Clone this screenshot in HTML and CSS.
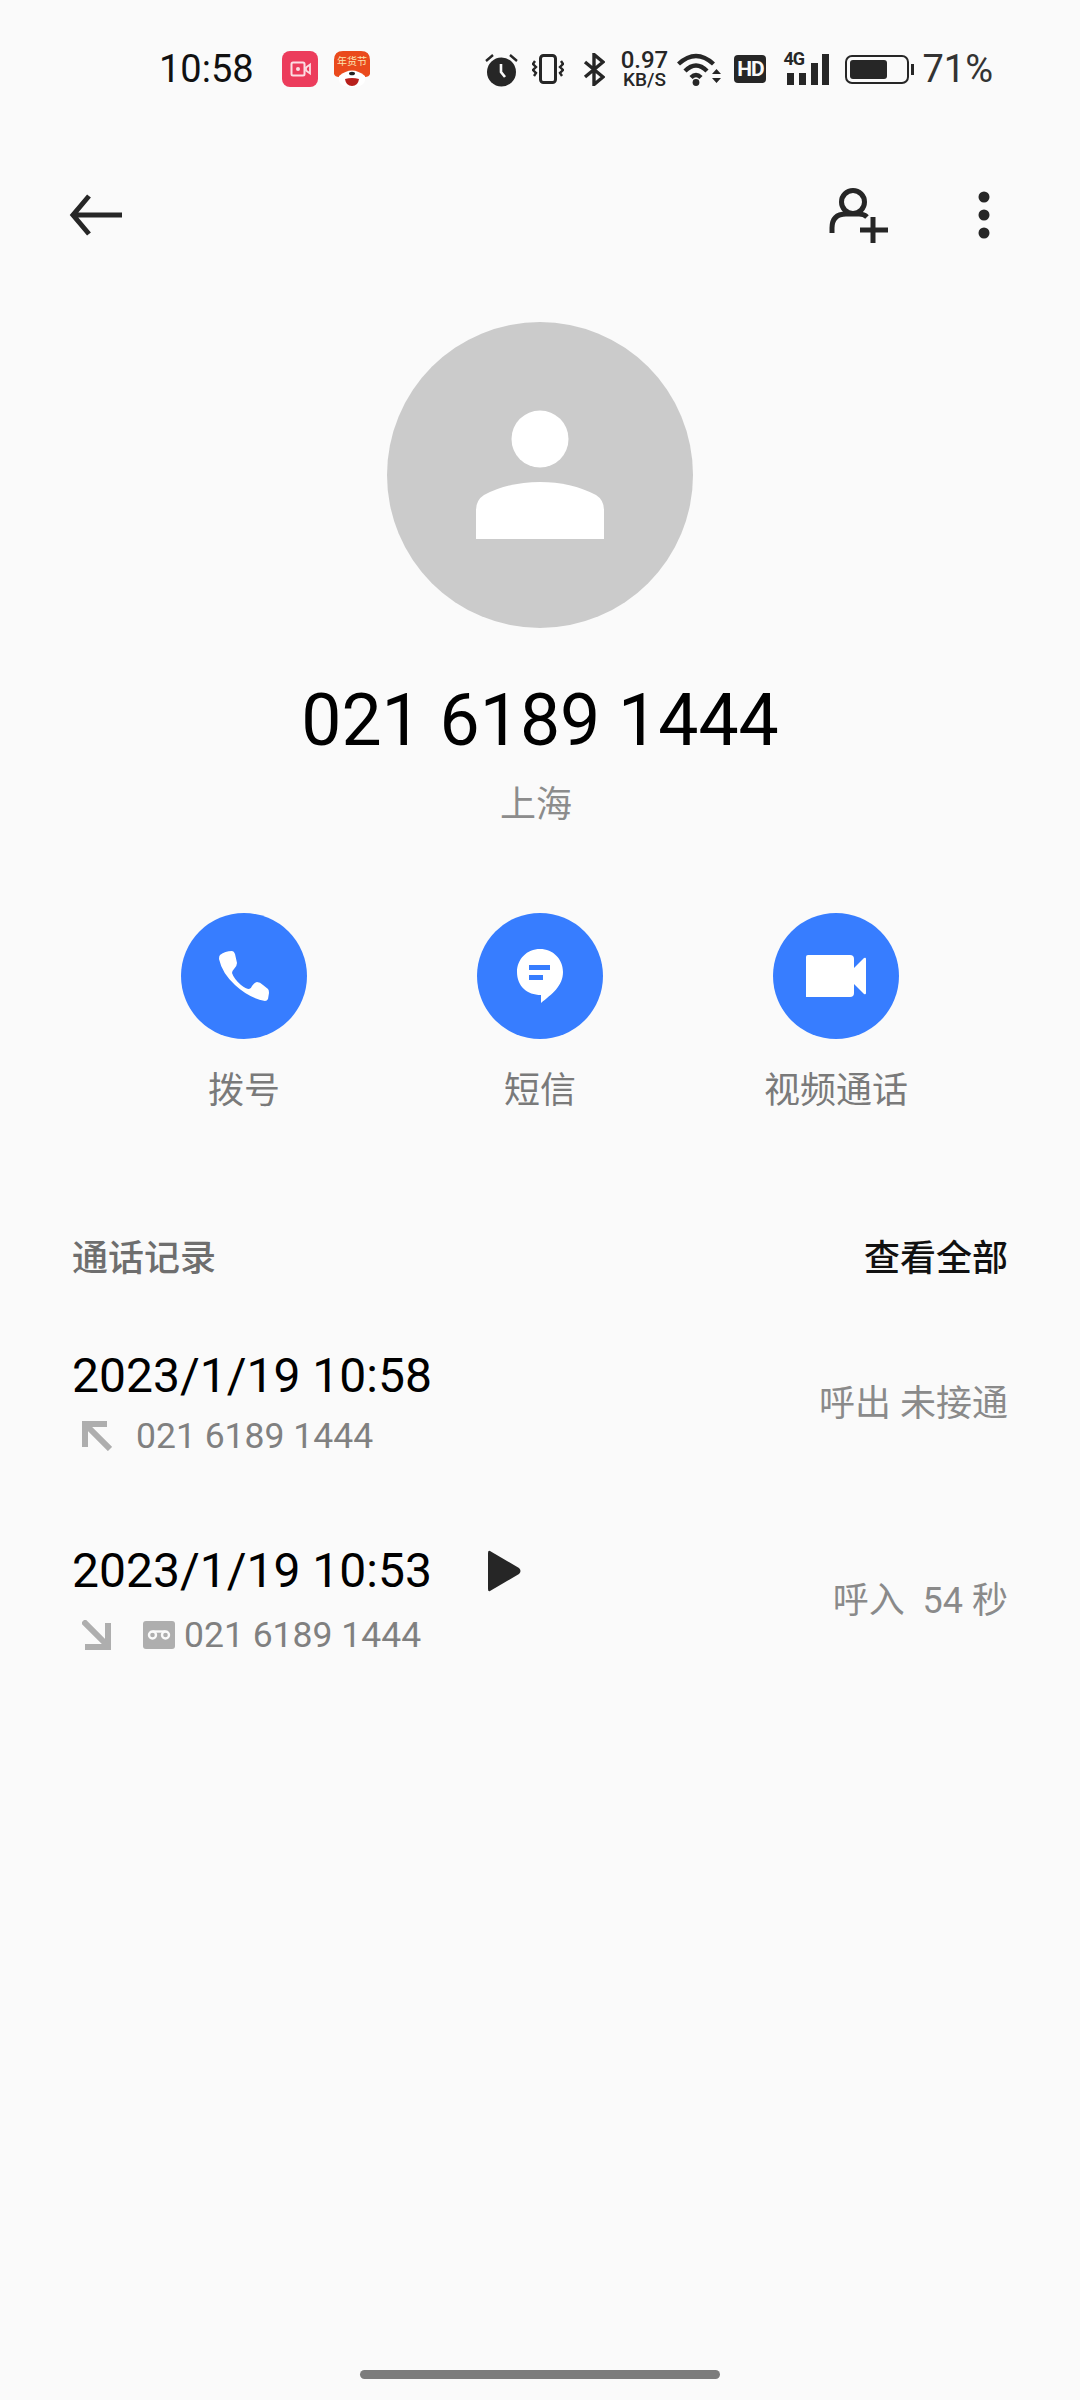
FILE: index.html
```html
<!DOCTYPE html>
<html lang="zh-CN">

<head>
    <meta charset="UTF-8">
    <meta name="viewport" content="width=device-width, initial-scale=1.0">
    <title>通话详情</title>
    <link rel="stylesheet" href="styles.css">
</head>

<body>

    <div class="status-bar">
        <span class="clock">10:58</span>
        <svg class="app-icon record-app" width="36" height="36" viewBox="0 0 36 36">
            <rect width="36" height="36" rx="8" fill="#ec3c5c"/>
            <rect x="9.500" y="11.500" width="13" height="13" rx="1.500" fill="none" stroke="#fbdde3" stroke-width="2"/>
            <circle cx="16" cy="18" r="2" fill="#fbdde3"/>
            <path d="M24 16.500l4-3v9l-4-3z" fill="none" stroke="#fbdde3" stroke-width="1.800"/>
        </svg>
        <svg class="app-icon" width="38" height="38" viewBox="0 0 38 38">
            <path d="M1 24V10Q1 1 10 1H28Q37 1 37 10V24Q36 27 32 27Q19 17 6 27Q2 27 1 24z" fill="#ea4a1c"/>
            <path d="M6 26Q19 15 32 26Q34 37 19 37Q4 37 6 26z" fill="#fff"/>
            <path d="M12 29Q19 27 26 29Q25 36 19 36Q13 36 12 29z" fill="#b8201c"/>
            <ellipse cx="19" cy="23.500" rx="3" ry="1.800" fill="#222"/>
            <text class="jd-text" x="19" y="15" text-anchor="middle">年货节</text>
        </svg>

        <div class="status-right">
            <svg class="alarm" width="33" height="35" viewBox="0 0 33 35">
                <circle cx="16.500" cy="20" r="14.500" fill="#262626"/>
                <path d="M16 12v8l4 5" fill="none" stroke="#fafafa" stroke-width="2.600"/>
                <path d="M1 9l7-6M32 9l-7-6" stroke="#262626" stroke-width="2.400"/>
            </svg>
            <svg class="vibrate" width="32" height="30" viewBox="0 0 32 30">
                <rect x="8.500" y="1.500" width="15" height="27" rx="3" fill="none" stroke="#262626" stroke-width="3"/>
                <path d="M3 7l-2 3 3 3-3 3 3 3-2 3M29 7l2 3-3 3 3 3-3 3 2 3" fill="none" stroke="#262626" stroke-width="2.400"/>
            </svg>
            <svg class="bluetooth" width="22" height="33" viewBox="0 0 22 33">
                <path d="M2 9l18 15-9 7.500V1.500l9 7.500L2 24" fill="none" stroke="#262626" stroke-width="3.400"/>
            </svg>
            <div class="speed">
                <span class="speed-num">0.97</span>
                <span class="speed-unit">KB/S</span>
            </div>
            <svg class="wifi" width="45" height="33" viewBox="0 0 45 33">
                <path d="M1.500 11Q19-5 36.500 11M8 18Q19 7 30 18M14 24.500Q19 19.500 24 24.500" fill="none" stroke="#262626" stroke-width="4.400"/>
                <circle cx="19" cy="29.500" r="3.400" fill="#262626"/>
                <path d="M35 21l4.500-5 4.500 5zM35 25l4.500 5 4.500-5z" fill="#262626"/>
            </svg>
            <div class="hd-badge">HD</div>
            <div class="signal">
                <span class="signal-type">4G</span>
                <span class="bar bar-1"></span>
                <span class="bar bar-2"></span>
                <span class="bar bar-3"></span>
                <span class="bar bar-4"></span>
            </div>
            <div class="battery">
                <div class="battery-body"><div class="battery-level"></div></div>
                <div class="battery-tip"></div>
            </div>
            <span class="battery-text">71%</span>
        </div>
    </div>

    <div class="toolbar">
        <svg width="54" height="42" viewBox="0 0 54 42">
            <path d="M53 21H4M20 2L4 21l16 19" fill="none" stroke="#262626" stroke-width="5"/>
        </svg>
        <div class="toolbar-right">
            <svg width="60" height="56" viewBox="0 0 60 56">
                <circle cx="24" cy="15" r="11.500" fill="none" stroke="#262626" stroke-width="5"/>
                <path d="M3 46V41Q3 27 17 27H30Q35 27 38 30" fill="none" stroke="#262626" stroke-width="5"/>
                <path d="M44 30V56M31 43H59" fill="none" stroke="#262626" stroke-width="5"/>
            </svg>
            <svg class="more" width="12" height="48" viewBox="0 0 12 48">
                <circle cx="6" cy="6" r="5.500" fill="#262626"/>
                <circle cx="6" cy="24" r="5.500" fill="#262626"/>
                <circle cx="6" cy="42" r="5.500" fill="#262626"/>
            </svg>
        </div>
    </div>

    <div class="contact">
        <svg class="avatar" width="306" height="306" viewBox="0 0 306 306">
            <circle cx="153" cy="153" r="153" fill="#cbcbcb"/>
            <circle cx="153" cy="117" r="28.500" fill="#fff"/>
            <path d="M89 217V188Q89 178 97 173Q122 160 153 160Q184 160 209 173Q217 178 217 188V217z" fill="#fff"/>
        </svg>
        <div class="number">021 6189 1444</div>
        <div class="place">上海</div>
    </div>

    <div class="actions">
        <div class="action">
            <div class="action-circle">
                <svg width="50" height="50" viewBox="0 0 50 50">
                    <path d="M1 4Q6 0 13 0Q15 0 16 3L18 12Q18 15 15 18Q13 20 13 22Q15 28 22 34Q27 38 30 38Q32 38 33 35Q36 31 38 31Q41 31 44 34L49 38Q50 39 50 42L49 48Q48 50 46 50Q30 47 16 34Q3 22 0 8Q0 5 1 4z" fill="#fff"/>
                </svg>
            </div>
            <div class="action-label">拨号</div>
        </div>
        <div class="action">
            <div class="action-circle">
                <svg width="48" height="56" viewBox="0 0 48 56">
                    <path d="M24 1C37 1 47 11 47 24C47 38 36 46 25 55V47C11 47 1 38 1 24C1 11 11 1 24 1z" fill="#fff"/>
                    <rect x="13" y="17" width="21" height="5" fill="#377dff"/>
                    <rect x="13" y="27" width="14" height="5" fill="#377dff"/>
                </svg>
            </div>
            <div class="action-label">短信</div>
        </div>
        <div class="action">
            <div class="action-circle">
                <svg width="60" height="42" viewBox="0 0 60 42">
                    <path d="M2 0H44Q48 0 48 4V38Q48 42 44 42H0V2Q0 0 2 0z" fill="#fff"/>
                    <path d="M47 14L58 3Q60 2 60 4V38Q60 40 58 39L47 28z" fill="#fff"/>
                </svg>
            </div>
            <div class="action-label">视频通话</div>
        </div>
    </div>

    <div class="log-head">
        <span class="log-title">通话记录</span>
        <span class="log-all">查看全部</span>
    </div>

    <div class="log-row">
        <div class="log-main">
            <div class="log-date">2023/1/19 10:58</div>
            <div class="log-sub">
                <svg class="direction" width="30" height="30" viewBox="0 0 30 30">
                    <path d="M28 28L5 5M0 3H25M3 0V26" fill="none" stroke="#aeaeae" stroke-width="6"/>
                </svg>
                <span class="log-number">021 6189 1444</span>
            </div>
        </div>
        <div class="log-status">呼出 未接通</div>
    </div>

    <div class="log-row second">
        <div class="log-main">
            <div class="log-date">2023/1/19 10:53
                <svg class="play" width="34" height="42" viewBox="0 0 34 42">
                    <path d="M3 1L32 18Q35 21 32 24L3 41Q1 42 1 39V3Q1 0 3 1z" fill="#262626"/>
                </svg>
            </div>
            <div class="log-sub">
                <svg class="direction" width="30" height="30" viewBox="0 0 30 30">
                    <path d="M1 1L24 24M3 27H28M26 3V30" fill="none" stroke="#aeaeae" stroke-width="6"/>
                </svg>
                <svg class="voicemail" width="32" height="28" viewBox="0 0 32 28">
                    <rect width="32" height="28" rx="3" fill="#aeaeae"/>
                    <circle cx="9.500" cy="14" r="3.500" fill="none" stroke="#fafafa" stroke-width="2.400"/>
                    <circle cx="22.500" cy="14" r="3.500" fill="none" stroke="#fafafa" stroke-width="2.400"/>
                    <path d="M9.500 10.500H22.500" stroke="#fafafa" stroke-width="2.400"/>
                </svg>
                <span class="log-number">021 6189 1444</span>
            </div>
        </div>
        <div class="log-status">呼入&nbsp; 54 秒</div>
    </div>

    <div class="home-bar"></div>

</body>

</html>
```

FILE: styles.css
```css
body {
    margin: 0;
    width: 1080px;
    height: 2400px;
    position: relative;
    overflow: hidden;
    background-color: #fafafa;
    font-family: Roboto, 'Noto Sans CJK SC', sans-serif;
    color: #000;
}

.status-bar {
    height: 138px;
    display: flex;
    align-items: center;
    padding-left: 159px;
    padding-right: 87px;
    box-sizing: border-box;
}

.clock {
    font-size: 38px;
    color: #111;
    width: 123px;
}

.app-icon {
    margin-right: 15px;
}

.jd-text {
    font-size: 10px;
    fill: #fbe3b0;
}

.status-right {
    margin-left: auto;
    display: flex;
    align-items: center;
    color: #262626;
}

.alarm {
    margin-right: 14px;
}

.vibrate {
    margin-right: 19px;
}

.bluetooth {
    margin-right: 14px;
}

.speed {
    width: 50px;
    margin-right: 8px;
    display: flex;
    flex-direction: column;
    align-items: center;
    font-weight: 500;
}

.speed-num {
    font-size: 24px;
    line-height: 21px;
}

.speed-unit {
    font-size: 19px;
    line-height: 18px;
}

.wifi {
    margin-right: 12px;
}

.hd-badge {
    width: 32px;
    height: 28px;
    margin-right: 17px;
    background-color: #262626;
    border-radius: 4px;
    color: #fafafa;
    font-size: 21px;
    font-weight: 700;
    line-height: 28px;
    text-align: center;
    letter-spacing: -1px;
}

.signal {
    width: 46px;
    height: 31px;
    margin-right: 16px;
    position: relative;
    display: flex;
    align-items: flex-end;
    justify-content: space-between;
    padding-left: 4px;
    box-sizing: border-box;
}

.signal-type {
    position: absolute;
    left: 0;
    top: -3px;
    font-size: 18px;
    line-height: 16px;
    font-weight: 700;
    letter-spacing: -1px;
}

.bar {
    width: 7px;
    background-color: #262626;
}

.bar-1 {
    height: 12px;
}

.bar-2 {
    height: 12px;
}

.bar-3 {
    height: 22px;
}

.bar-4 {
    height: 31px;
}

.battery {
    display: flex;
    align-items: center;
    margin-right: 8px;
}

.battery-body {
    width: 64px;
    height: 29px;
    box-sizing: border-box;
    border: 2px solid #262626;
    border-radius: 7px;
    padding: 3px;
}

.battery-level {
    width: 37px;
    height: 100%;
    background-color: #262626;
    border-radius: 3px;
}

.battery-tip {
    width: 3px;
    height: 11px;
    margin-left: 2px;
    background-color: #262626;
}

.battery-text {
    font-size: 38px;
    color: #333;
}

.toolbar {
    height: 154px;
    display: flex;
    align-items: center;
    justify-content: space-between;
    padding: 0 90px 0 69px;
}

.toolbar-right {
    display: flex;
    align-items: center;
    gap: 89px;
}

.contact {
    display: flex;
    flex-direction: column;
    align-items: center;
    margin-top: 30px;
}

.avatar {
    display: block;
}

.number {
    margin-top: 51px;
    font-size: 71.500px;
    line-height: 84px;
}

.place {
    margin-top: 18px;
    margin-right: 8px;
    font-size: 36px;
    line-height: 48px;
    color: #8c8c8c;
}

.actions {
    display: flex;
    justify-content: center;
    gap: 130px;
    margin-top: 84px;
}

.action {
    width: 166px;
    display: flex;
    flex-direction: column;
    align-items: center;
}

.action-circle {
    width: 126px;
    height: 126px;
    border-radius: 50%;
    background-color: #377dff;
    display: flex;
    align-items: center;
    justify-content: center;
}

.action-label {
    margin-top: 28px;
    font-size: 36px;
    line-height: 48px;
    color: #7a7a7a;
    white-space: nowrap;
}

.log-head {
    display: flex;
    justify-content: space-between;
    margin-top: 120px;
    padding: 0 72px;
    font-size: 36px;
    line-height: 48px;
}

.log-title {
    color: #6e6e6e;
    font-weight: 500;
}

.log-all {
    color: #111;
    font-weight: 500;
}

.log-row {
    display: flex;
    justify-content: space-between;
    align-items: center;
    margin-top: 65px;
    padding: 0 72px;
}

.log-row.second {
    margin-top: 85px;
}

.log-date {
    font-size: 48px;
    line-height: 56px;
    display: flex;
    align-items: center;
}

.play {
    margin-left: 55px;
}

.log-sub {
    display: flex;
    align-items: center;
    height: 44px;
    margin-top: 10px;
}

.second .log-sub {
    margin-top: 14px;
}

.direction {
    margin-left: 10px;
    margin-right: 24px;
}

.second .direction {
    margin-right: 22px;
}

.voicemail {
    margin-left: 9px;
    margin-right: 9px;
}

.log-number {
    font-size: 35.500px;
    color: #808080;
}

.log-status {
    padding-bottom: 6px;
    font-size: 36px;
    color: #8a8a8a;
}

.home-bar {
    position: absolute;
    left: 360px;
    top: 2370px;
    width: 360px;
    height: 9px;
    border-radius: 5px;
    background-color: #7c7c7c;
}
```
